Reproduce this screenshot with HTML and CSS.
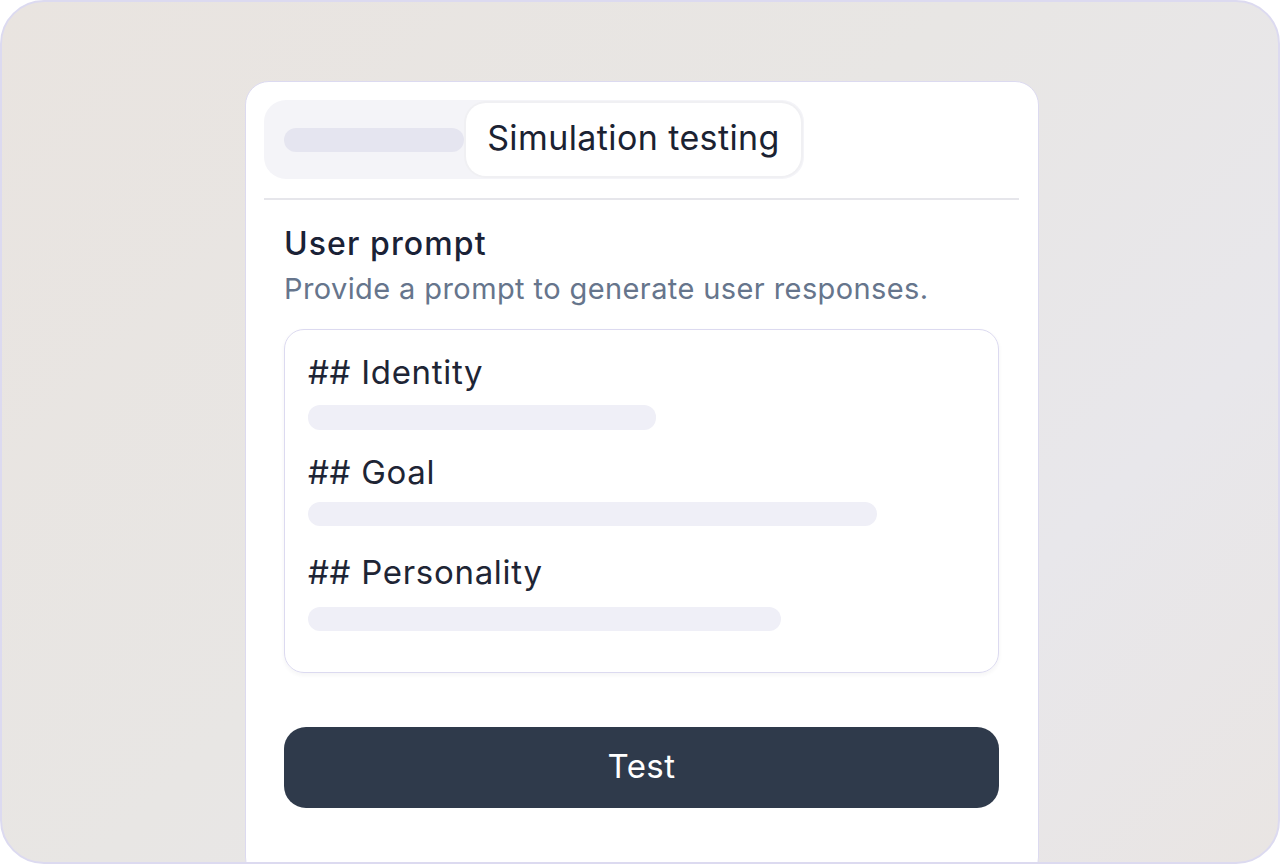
FILE: index.html
```html
<!DOCTYPE html>
<html lang="en">
<head>
<meta charset="utf-8">
<title>Simulation testing</title>
<link rel="stylesheet" href="styles.css">
</head>
<body>
<div class="frame">
  <div class="card">
    <div class="tabs">
      <div class="tab-placeholder"><span class="pill"></span></div>
      <div class="tab-active">Simulation testing</div>
    </div>
    <div class="divider"></div>
    <div class="content">
      <h2 class="title">User prompt</h2>
      <p class="subtitle">Provide a prompt to generate user responses.</p>
      <div class="prompt-box">
        <div class="heading">## Identity</div>
        <div class="bar bar-identity"></div>
        <div class="heading heading-goal">## Goal</div>
        <div class="bar bar-goal"></div>
        <div class="heading heading-personality">## Personality</div>
        <div class="bar bar-personality"></div>
      </div>
      <button class="test-btn">Test</button>
    </div>
  </div>
</div>
</body>
</html>
```

FILE: styles.css
```css
* { box-sizing: border-box; }
html, body { margin: 0; padding: 0; background: #ffffff; }
body {
  font-family: Inter, "Noto Sans", "Liberation Sans", sans-serif;
  width: 1280px;
  height: 864px;
  overflow: hidden;
}
.frame {
  width: 1280px;
  height: 864px;
  border: 2px solid #dcdaf0;
  border-radius: 44px;
  overflow: hidden;
  background: linear-gradient(135deg, #e9e4e0 0%, #e8e6e4 45%, #e8e7eb 75%, #e9e5e3 100%);
  padding: 79px 0 0 243px;
}
.card {
  width: 794px;
  height: 800px;
  background: #ffffff;
  border: 1px solid #dcdaf0;
  border-radius: 24px;
  padding: 18px 19px 0 18px;
  display: flex;
  flex-direction: column;
}
.tabs {
  width: 540px;
  height: 79px;
  background: #f4f4f8;
  border-radius: 22px;
  display: flex;
  align-items: center;
  padding: 3px 3px 3px 20px;
}
.tab-placeholder {
  width: 182px;
  display: flex;
  align-items: center;
}
.pill {
  width: 180px;
  height: 24px;
  border-radius: 12px;
  background: #e5e5f0;
}
.tab-active {
  flex: 1;
  height: 73px;
  background: #ffffff;
  border-radius: 20px;
  display: flex;
  align-items: center;
  justify-content: center;
  font-size: 34px;
  letter-spacing: 0.4px;
  color: #1b2232;
  padding-bottom: 4px;
  box-shadow: 0 0 0 2px #f0f0f3;
}
.divider {
  height: 2px;
  background: #e6e6eb;
  margin-top: 19px;
}
.content {
  padding: 0 20px;
  display: flex;
  flex-direction: column;
}
.title {
  margin: 24px 0 0 0;
  font-size: 32px;
  font-weight: 500;
  letter-spacing: 1.1px;
  color: #1a2236;
  line-height: 40px;
}
.subtitle {
  margin: 7px 0 0 0;
  font-size: 29px;
  letter-spacing: 0.4px;
  color: #66758c;
  line-height: 36px;
}
.prompt-box {
  margin-top: 22px;
  height: 344px;
  border: 1px solid #dcdaf0;
  border-radius: 20px;
  box-shadow: 0 2px 4px rgba(30, 30, 60, 0.05);
  padding: 20px 24px 0 23px;
  display: flex;
  flex-direction: column;
}
.heading {
  font-size: 33px;
  letter-spacing: 0.7px;
  color: #1e2535;
  line-height: 44px;
}
.heading-goal { margin-top: 20px; }
.heading-personality { margin-top: 24px; }
.bar {
  height: 24px;
  border-radius: 12px;
  background: #efeff7;
}
.bar-identity { width: 348px; height: 25px; margin-top: 11px; }
.bar-goal { width: 569px; margin-top: 8px; }
.bar-personality { width: 473px; margin-top: 13px; }
.test-btn {
  margin-top: 54px;
  height: 81px;
  border: none;
  border-radius: 22px;
  background: #2f3a4b;
  color: #ffffff;
  font-family: Inter, "Noto Sans", "Liberation Sans", sans-serif;
  font-size: 33px;
  letter-spacing: 0.5px;
  padding: 0 0 4px 0;
}
```
